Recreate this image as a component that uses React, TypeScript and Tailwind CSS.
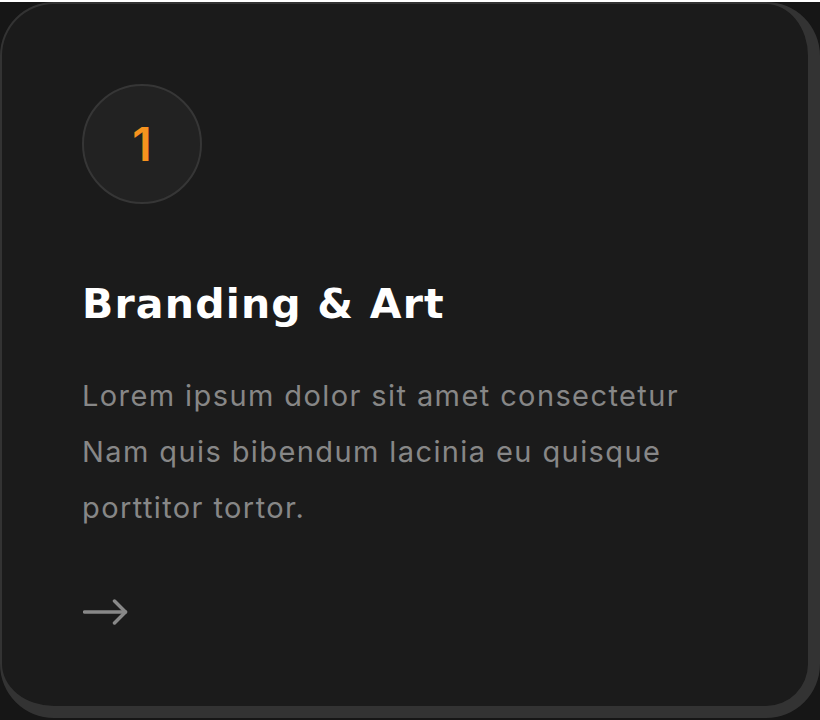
export default function App() {
  return (
    <div className="h-[720px] w-[820px] bg-[#161616] font-['Inter',sans-serif]">
      <div className="mt-[2px] h-[716px] w-[820px] rounded-[54px] border-t-2 border-l-2 border-r-[12px] border-b-[12px] border-[#333333] bg-[#1b1b1b] px-[80px] pt-[80px]">
        <div className="flex h-[120px] w-[120px] items-center justify-center rounded-full border-2 border-[#363636] bg-[#222222]">
          <span className="text-[46px] leading-none font-semibold text-[#f7931e]">1</span>
        </div>
        <h2 className="mt-[74px] font-['DejaVu_Sans',sans-serif] text-[41px] leading-[52px] font-bold tracking-[1.2px] text-white">
          Branding &amp; Art
        </h2>
        <p className="mt-[38px] text-[29px] leading-[56px] tracking-[1.4px] text-[#878787]">
          Lorem ipsum dolor sit amet consectetur
          <br />
          Nam quis bibendum lacinia eu quisque
          <br />
          porttitor tortor.
        </p>
        <svg className="mt-[63px] ml-[1px]" width="46" height="26" viewBox="0 0 46 26" fill="none" stroke="#888888" strokeWidth="3.5" strokeLinecap="round" strokeLinejoin="round">
          <path d="M1.5 13H42.5" />
          <path d="M31.5 2L42.5 13L31.5 24" />
        </svg>
      </div>
    </div>
  )
}
